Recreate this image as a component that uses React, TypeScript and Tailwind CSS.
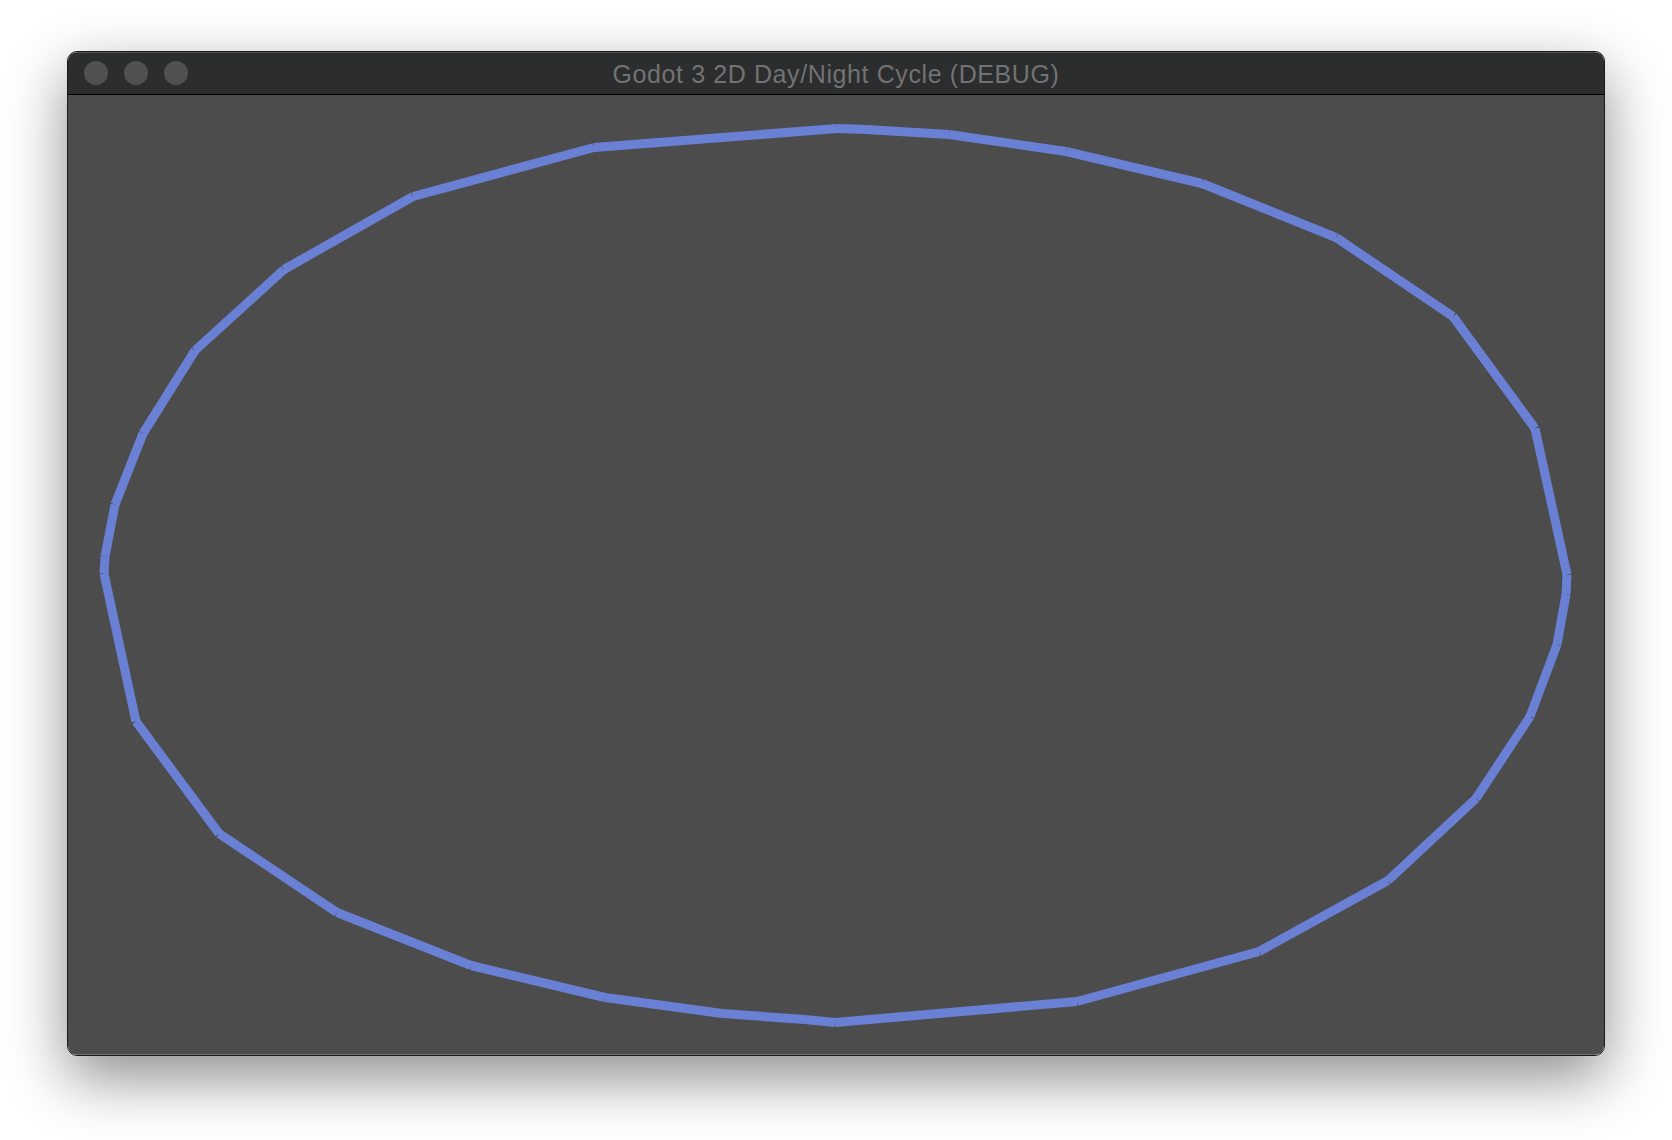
const points: [number, number][] = [
  [594, 148],
  [837, 129],
  [866, 130],
  [949, 135],
  [1066, 152],
  [1202, 184],
  [1336, 238],
  [1453, 317],
  [1535, 429],
  [1567, 575],
  [1566, 595],
  [1557, 645],
  [1530, 717],
  [1476, 799],
  [1388, 881],
  [1259, 952],
  [1077, 1002],
  [835, 1023],
  [805, 1020],
  [722, 1014],
  [605, 998],
  [471, 966],
  [337, 913],
  [219, 834],
  [136, 722],
  [104, 574],
  [105, 557],
  [115, 505],
  [143, 434],
  [195, 351],
  [284, 270],
  [413, 197],
];

function Orbit() {
  return (
    <svg className="block h-full w-full" viewBox="68 96 1536 959">
      {points.map(([x1, y1], i) => {
        const [x2, y2] = points[(i + 1) % points.length];
        return (
          <line
            key={i}
            x1={x1}
            y1={y1}
            x2={x2}
            y2={y2}
            stroke="rgb(112,138,236)"
            strokeOpacity={0.85}
            strokeWidth={9}
            strokeLinecap="butt"
          />
        );
      })}
    </svg>
  );
}

export default function App() {
  return (
    <div className="h-[1140px] w-[1672px] bg-white pl-[67px] pt-[51px]">
      <div className="flex h-[1005px] w-[1538px] flex-col overflow-hidden rounded-[10px] border border-[#1a1a1a] shadow-[0_22px_60px_rgba(0,0,0,0.45)]">
        <div className="relative flex h-[43px] shrink-0 items-center gap-4 border-b border-black bg-[#2c2d2f] pl-4 shadow-[inset_0_1px_0_rgba(255,255,255,0.18)]">
          <span className="h-6 w-6 rounded-full bg-[#4f5052]" />
          <span className="h-6 w-6 rounded-full bg-[#4f5052]" />
          <span className="h-6 w-6 rounded-full bg-[#4f5052]" />
          <div className="pointer-events-none absolute inset-0 flex items-center justify-center pt-[3px] font-['Liberation_Sans',Arial,sans-serif] text-[25px] tracking-[0.6px] text-[#727272]">
            Godot 3 2D Day/Night Cycle (DEBUG)
          </div>
        </div>
        <div className="min-h-0 flex-1 bg-[#4c4c4c] shadow-[inset_0_-1px_0_rgba(255,255,255,0.2)]">
          <Orbit />
        </div>
      </div>
    </div>
  );
}
